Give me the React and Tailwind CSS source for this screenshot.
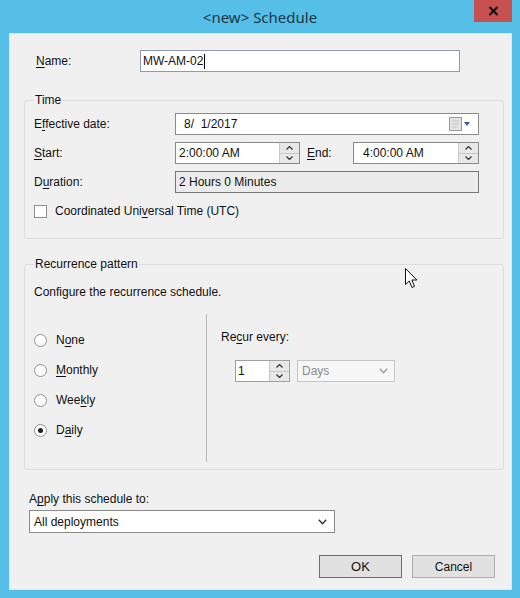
import React from 'react';

const U = ({ children }) => <span className="underline underline-offset-[2px]">{children}</span>;

const Spinner = () => (
    <div className="flex flex-col w-[20px] h-full border-l border-[#c8c8c8]">
        <div className="flex-1 bg-[#e8e8e8] border-b border-[#c8c8c8] flex items-center justify-center">
            <svg width="7" height="4" viewBox="0 0 7 4"><path d="M0.5 3.5 L3.5 0.5 L6.5 3.5" fill="none" stroke="#333" strokeWidth="1.2" /></svg>
        </div>
        <div className="flex-1 bg-[#e8e8e8] flex items-center justify-center">
            <svg width="7" height="4" viewBox="0 0 7 4"><path d="M0.5 0.5 L3.5 3.5 L6.5 0.5" fill="none" stroke="#333" strokeWidth="1.2" /></svg>
        </div>
    </div>
);

const Chevron = ({ color = '#333' }) => (
    <svg width="9" height="6" viewBox="0 0 9 6"><path d="M0.8 0.8 L4.5 4.8 L8.2 0.8" fill="none" stroke={color} strokeWidth="1.4" /></svg>
);

const Radio = ({ checked, children }) => (
    <div className="flex items-center h-[16px]">
        <div className="w-[13px] h-[13px] rounded-full border border-[#8f8f8f] bg-white flex items-center justify-center">
            {checked && <div className="w-[5px] h-[5px] rounded-full bg-[#222]" />}
        </div>
        <span className="ml-[9px]">{children}</span>
    </div>
);

const App = () => {
    return (
        <div className="relative w-[520px] h-[598px] bg-[#55bfe7] flex flex-col font-['Liberation_Sans',Arial,sans-serif] text-[12px] leading-[14px] text-[#111]">
            {/* Title bar */}
            <div className="relative h-[33px] flex items-center justify-center">
                <span className="text-[15px] text-[#1d3547] font-['Noto_Sans',sans-serif] pt-[1px]">&lt;new&gt; Schedule</span>
                <div className="absolute top-0 right-[8px] w-[38px] h-[22px] bg-[#c75050] flex items-center justify-center">
                    <svg width="11" height="10" viewBox="0 0 11 10"><path d="M1.5 1 L9.5 9 M9.5 1 L1.5 9" stroke="#111" strokeWidth="2.2" /></svg>
                </div>
            </div>

            {/* Client area */}
            <div className="ml-[9px] mr-[8px] h-[557px] bg-[#f0f0f0] border border-[#e4e4e4] flex flex-col pl-[14px] pr-[7px]">
                {/* Name */}
                <div className="flex items-center mt-[16px] h-[22px]">
                    <div className="w-[116px] pl-[12px]"><U>N</U>ame:</div>
                    <div className="w-[320px] h-[22px] bg-white border border-[#8c9cb0] flex items-center pl-[2px]">
                        MW-AM-02<span className="w-[1px] h-[15px] bg-black ml-[1px]" />
                    </div>
                </div>

                {/* Time group */}
                <div className="mt-[28px] h-[139px] border border-[#d8dde1] rounded-[3px] px-[9px] flex flex-col">
                    <div className="-mt-[8px] w-fit px-[1px] bg-[#f0f0f0]">Time</div>

                    <div className="flex items-center h-[22px] mt-[6px]">
                        <div className="w-[141px]">E<U>f</U>fective date:</div>
                        <div className="w-[304px] h-[22px] bg-white border border-[#8a8a8a] flex items-center pl-[8px] pr-[7px]">
                            <span className="flex-1">8/&nbsp;&nbsp;1/2017</span>
                            <svg width="22" height="14" viewBox="0 0 22 14">
                                <rect x="0.5" y="0.5" width="12" height="13" fill="#e4e4e4" stroke="#9a9a9a" />
                                <path d="M3 4 H10 M3 7 H10 M3 10 H8" stroke="#c4c4c4" />
                                <path d="M15 5 L21 5 L18 9 Z" fill="#3a5f98" />
                            </svg>
                        </div>
                    </div>

                    <div className="flex items-center h-[22px] mt-[7px]">
                        <div className="w-[141px]"><U>S</U>tart:</div>
                        <div className="w-[125px] h-[22px] bg-white border border-[#8a8a8a] flex items-center">
                            <span className="flex-1 pl-[3px]">2:00:00 AM</span>
                            <Spinner />
                        </div>
                        <div className="w-[53px] pl-[7px]"><U>E</U>nd:</div>
                        <div className="w-[126px] h-[22px] bg-white border border-[#8a8a8a] flex items-center">
                            <span className="flex-1 pl-[9px]">4:00:00 AM</span>
                            <Spinner />
                        </div>
                    </div>

                    <div className="flex items-center h-[22px] mt-[7px]">
                        <div className="w-[141px]">D<U>u</U>ration:</div>
                        <div className="w-[304px] h-[22px] bg-[#ececec] border border-[#777] flex items-center pl-[3px]">
                            2 Hours 0 Minutes
                        </div>
                    </div>

                    <div className="flex items-center mt-[11px] h-[14px]">
                        <div className="w-[13px] h-[13px] bg-white border border-[#8f8f8f]" />
                        <span className="ml-[8px]">Coordinated Uni<U>v</U>ersal Time (UTC)</span>
                    </div>
                </div>

                {/* Recurrence group */}
                <div className="mt-[25px] h-[206px] border border-[#d8dde1] rounded-[3px] pl-[9px] flex flex-col">
                    <div className="-mt-[8px] w-fit px-[1px] bg-[#f0f0f0]">Recurrence pattern</div>
                    <div className="mt-[14px]">Configure the recurrence schedule.</div>

                    <div className="flex mt-[15px] h-[148px]">
                        <div className="w-[173px] border-r border-[#b8b8b8] flex flex-col gap-[14px] pt-[18px]">
                            <Radio>N<U>o</U>ne</Radio>
                            <Radio><U>M</U>onthly</Radio>
                            <Radio>Wee<U>k</U>ly</Radio>
                            <Radio checked>D<U>a</U>ily</Radio>
                        </div>
                        <div className="flex flex-col pt-[16px] pl-[14px]">
                            <div>Re<U>c</U>ur every:</div>
                            <div className="flex mt-[16px] ml-[14px] gap-[7px]">
                                <div className="w-[55px] h-[22px] bg-white border border-[#a0a0a0] flex items-center">
                                    <span className="flex-1 pl-[2px]">1</span>
                                    <Spinner />
                                </div>
                                <div className="w-[98px] h-[22px] bg-[#f7f7f7] border border-[#c6c6c6] flex items-center pl-[4px] pr-[6px] text-[#8a8a8a]">
                                    <span className="flex-1">Days</span>
                                    <Chevron color="#9a9a9a" />
                                </div>
                            </div>
                        </div>
                    </div>
                </div>

                {/* Apply to */}
                <div className="mt-[22px] pl-[5px]"><span>A<U>p</U>ply this schedule to:</span></div>
                <div className="mt-[4px] ml-[5px] w-[306px] h-[23px] bg-white border border-[#8a8a8a] flex items-center pl-[4px] pr-[7px]">
                    <span className="flex-1">All deployments</span>
                    <Chevron />
                </div>

                {/* Buttons */}
                <div className="mt-[22px] flex justify-end gap-[10px] pr-[9px]">
                    <button className="w-[83px] h-[23px] bg-[#e1e1e1] border border-[#3d7ab3] text-[13px] text-[#111]">OK</button>
                    <button className="w-[83px] h-[23px] bg-[#e1e1e1] border border-[#adadad] text-[12px] text-[#111]">Cancel</button>
                </div>
            </div>

            {/* Mouse cursor */}
            <svg className="absolute left-[405px] top-[268px]" width="13" height="22" viewBox="0 0 13 22">
                <path d="M0.5 0.5 L0.5 16.5 L4.3 13 L7 19.5 L9.5 18.4 L6.9 12 L11.9 12 Z" fill="#fff" stroke="#111" strokeWidth="1" strokeLinejoin="round" />
            </svg>
        </div>
    );
};

export default App;
